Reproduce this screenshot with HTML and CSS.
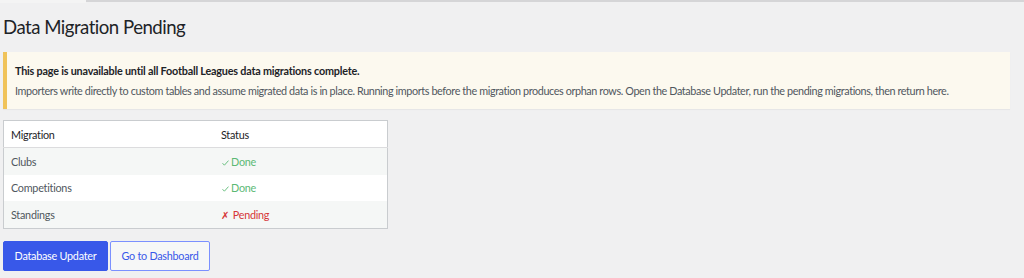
FILE: index.html
```html
<!DOCTYPE html>
<html lang="en">
<head>
<meta charset="utf-8">
<title>Data Migration Pending</title>
<link rel="stylesheet" href="styles.css">
</head>
<body>
<div class="topbar">
  <div class="tab"></div>
  <div class="tabline"></div>
</div>
<div class="wrap">
  <h1 class="title">Data Migration Pending</h1>
  <div class="notice">
    <p class="notice-strong">This page is unavailable until all Football Leagues data migrations complete.</p>
    <p class="notice-text">Importers write directly to custom tables and assume migrated data is in place. Running imports before the migration produces orphan rows. Open the Database Updater, run the pending migrations, then return here.</p>
  </div>
  <table class="mig-table">
    <thead>
      <tr><th class="col-name">Migration</th><th>Status</th></tr>
    </thead>
    <tbody>
      <tr class="alt"><td>Clubs</td><td class="done"><svg class="check" width="7" height="6" viewBox="0 0 7 6" aria-hidden="true"><polyline points="0.5,3.2 2.4,5.2 6.5,0.6" fill="none" stroke="currentColor" stroke-width="0.9"/></svg>Done</td></tr>
      <tr><td>Competitions</td><td class="done"><svg class="check" width="7" height="6" viewBox="0 0 7 6" aria-hidden="true"><polyline points="0.5,3.2 2.4,5.2 6.5,0.6" fill="none" stroke="currentColor" stroke-width="0.9"/></svg>Done</td></tr>
      <tr class="alt"><td>Standings</td><td class="pending"><span class="cross">✗</span>Pending</td></tr>
    </tbody>
  </table>
  <div class="actions">
    <a class="btn btn-primary" href="#">Database Updater</a>
    <a class="btn btn-secondary" href="#">Go to Dashboard</a>
  </div>
</div>
</body>
</html>
```
FILE: styles.css
```css
html, body {
  margin: 0;
  padding: 0;
  background: #f0f0f1;
}
body {
  font-family: Lato, "Open Sans", sans-serif;
  color: #3c434a;
  font-size: 10.8px;
  letter-spacing: -0.25px;
}
.topbar {
  display: flex;
  height: 3px;
}
.tab {
  width: 86px;
  background: #f4f4f4;
}
.tabline {
  flex: 1;
  border-top: 2px solid #d5d5d7;
}
.wrap {
  padding: 0 14px 0 3px;
}
.title {
  margin: 11px 0 0;
  font-size: 18.6px;
  letter-spacing: -0.5px;
  font-weight: 400;
  line-height: 26px;
  color: #1d2327;
}
.notice {
  margin-top: 12px;
  background: #fcf9ef;
  border-left: 4px solid #f0c35a;
  padding: 10px 12px 9px 8px;
  box-shadow: 0 1px 1px rgba(0,0,0,0.04);
}
.notice p {
  margin: 0;
  line-height: 18px;
}
.notice-strong {
  font-weight: 700;
  color: #1d2327;
  letter-spacing: -0.2px;
}
.notice-text {
  margin-top: 2px !important;
  color: #50575e;
  letter-spacing: -0.38px;
}
.mig-table {
  margin-top: 11px;
  width: 385px;
  border-collapse: collapse;
  border: 1px solid #c9cccf;
  background: #fff;
}
.mig-table th {
  text-align: left;
  font-weight: 400;
  color: #1d2327;
  height: 26px;
  padding: 0 7px;
  border-bottom: 1px solid #dcdcde;
}
.mig-table .col-name {
  width: 196px;
}
.mig-table td {
  height: 26.6px;
  padding: 0 7px;
  color: #50575e;
}
.mig-table tr.alt td {
  background: #f5f7f6;
}
.mig-table td.done {
  color: #5bb974;
}
.mig-table td.pending {
  color: #d63638;
}
.check {
  margin: 0 2px 0 1px;
  vertical-align: 0;
}
.cross {
  margin-right: 4px;
  font-size: 10px;
}
.actions {
  display: flex;
  gap: 2px;
  margin-top: 12px;
}
.btn {
  display: inline-flex;
  align-items: center;
  justify-content: center;
  height: 30px;
  box-sizing: border-box;
  text-decoration: none;
  font-size: 10.8px;
  border-radius: 2px;
}
.btn-primary {
  width: 105px;
  background: #3858e9;
  color: #fff;
  border: 1px solid #3858e9;
}
.btn-secondary {
  width: 100px;
  background: #f6f7f7;
  color: #3858e9;
  border: 1px solid #7b90ff;
}
```
